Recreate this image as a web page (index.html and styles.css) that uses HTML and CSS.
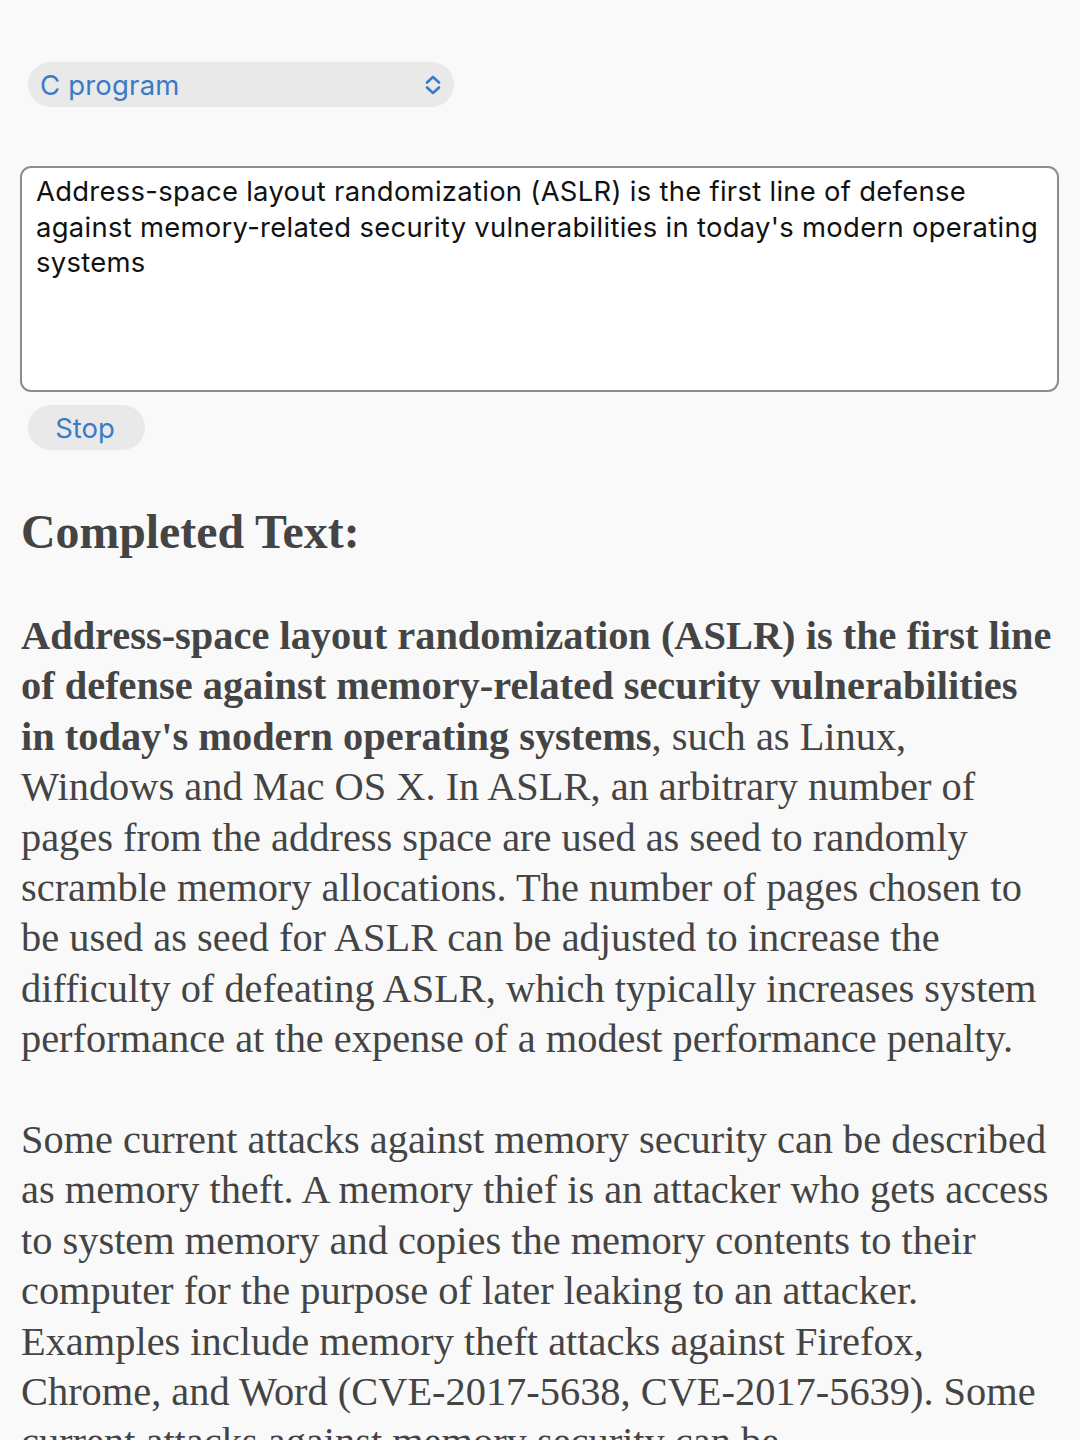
FILE: index.html
```html
<!DOCTYPE html>
<html lang="en">
<head>
<meta charset="utf-8">
<title>Text completion</title>
<link rel="stylesheet" href="styles.css">
</head>
<body>
<main class="page">
  <div class="controls">
    <div class="picker">
      <span class="picker-label">C program</span>
      <svg class="picker-arrows" width="18" height="22" viewBox="0 0 18 22" aria-hidden="true">
        <path d="M3 8.5 L9 3 L15 8.5" fill="none" stroke="#3a7bc8" stroke-width="2.6" stroke-linecap="round" stroke-linejoin="round"/>
        <path d="M3 13.5 L9 19 L15 13.5" fill="none" stroke="#3a7bc8" stroke-width="2.6" stroke-linecap="round" stroke-linejoin="round"/>
      </svg>
    </div>
  </div>

  <textarea class="prompt">Address-space layout randomization (ASLR) is the first line of defense against memory-related security vulnerabilities in today's modern operating systems</textarea>

  <div class="actions">
    <button class="pill-btn" type="button">Stop</button>
  </div>

  <h2 class="result-title">Completed Text:</h2>

  <div class="result">
    <p><strong>Address-space layout randomization (ASLR) is the first line of defense against memory-related security vulnerabilities in today's modern operating systems</strong>, such as Linux, Windows and Mac OS X. In ASLR, an arbitrary number of pages from the address space are used as seed to randomly scramble memory allocations. The number of pages chosen to be used as seed for ASLR can be adjusted to increase the difficulty of defeating ASLR, which typically increases system performance at the expense of a modest performance penalty.</p>
    <p>Some current attacks against memory security can be described as memory theft. A memory thief is an attacker who gets access to system memory and copies the memory contents to their computer for the purpose of later leaking to an attacker. Examples include memory theft attacks against Firefox, Chrome, and Word (CVE-2017-5638, CVE-2017-5639). Some current attacks against memory security can be</p>
  </div>
</main>
</body>
</html>
```

FILE: styles.css
```css
html, body {
  margin: 0;
  padding: 0;
  background: #f9f9f9;
}

body {
  overflow: hidden;
  height: 1440px;
}

.page {
  padding: 62px 20px 0 21px;
  display: flex;
  flex-direction: column;
  align-items: flex-start;
}

.controls {
  padding-left: 7px;
}

.picker {
  width: 426px;
  height: 45px;
  box-sizing: border-box;
  border-radius: 23px;
  background: #e9e9e9;
  display: flex;
  align-items: center;
  justify-content: space-between;
  padding: 0 12px 0 12px;
}

.picker-label {
  font-family: "Inter", "Noto Sans", sans-serif;
  font-size: 27.5px;
  color: #3a7bc8;
  letter-spacing: 0.2px;
}

.picker-arrows {
  display: block;
}

.prompt {
  margin-top: 59px;
  width: 1039px;
  height: 226px;
  margin-left: -1px;
  box-sizing: border-box;
  border: 2px solid #8c8c8c;
  border-radius: 11px;
  background: #fff;
  padding: 6px 14px;
  font-family: "Inter", "Noto Sans", sans-serif;
  font-size: 27.4px;
  letter-spacing: 0.3px;
  line-height: 35.5px;
  color: #111;
  resize: none;
  outline: none;
  overflow: hidden;
}

.actions {
  margin-top: 13px;
  padding-left: 7px;
}

.pill-btn {
  width: 117px;
  height: 45px;
  border: none;
  border-radius: 23px;
  background: #e9e9e9;
  font-family: "Inter", "Noto Sans", sans-serif;
  font-size: 27.5px;
  color: #3a7bc8;
  padding: 0 3px 0 0;
}

.result-title {
  margin: 52px 0 0;
  font-family: "Liberation Serif", "Times New Roman", serif;
  font-weight: bold;
  font-size: 47.8px;
  line-height: 60px;
  color: #444;
}

.result {
  margin-top: 49px;
  width: 1032px;
  font-family: "Liberation Serif", "Times New Roman", serif;
  font-size: 40.4px;
  line-height: 50.4px;
  color: #444;
}

.result p {
  margin: 0 0 50.4px;
}

.result strong {
  font-weight: bold;
}
```
